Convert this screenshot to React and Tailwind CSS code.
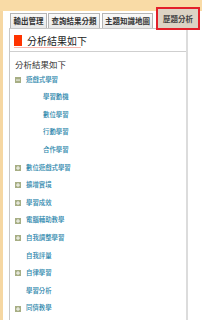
import React from "react";

const font = { fontFamily: '"Noto Sans CJK TC", "Noto Sans CJK SC", sans-serif' };

function Icon({ minus }) {
  return (
    <span className="w-[6px] h-[6px] bg-[#a7ae84] flex items-center justify-center shrink-0">
      <svg width="6" height="6" viewBox="0 0 6 6">
        <rect x="1" y="2.6" width="4" height="0.9" fill="#fff" />
        {!minus && <rect x="2.55" y="1" width="0.9" height="4" fill="#fff" />}
      </svg>
    </span>
  );
}

const rows = [
  { t: "遊戲式學習", icon: "minus", lvl: 0 },
  { t: "學習動機", lvl: 2 },
  { t: "數位學習", lvl: 2 },
  { t: "行動學習", lvl: 2 },
  { t: "合作學習", lvl: 2 },
  { t: "數位遊戲式學習", icon: "plus", lvl: 0 },
  { t: "擴增實境", icon: "plus", lvl: 0 },
  { t: "學習成效", icon: "plus", lvl: 0 },
  { t: "電腦輔助教學", icon: "plus", lvl: 0 },
  { t: "自我調整學習", icon: "plus", lvl: 0 },
  { t: "自我評量", lvl: 1 },
  { t: "自律學習", icon: "plus", lvl: 0 },
  { t: "學習分析", lvl: 1 },
  { t: "同儕教學", icon: "plus", lvl: 0 },
];

export default function App() {
  return (
    <div
      className="w-[202px] h-[320px] overflow-hidden bg-[linear-gradient(#f9dba6_11px,transparent_11px),linear-gradient(90deg,#f6d7a2_3px,#fff_3px)] pt-[7px] pl-[9px] flex flex-col"
      style={font}
    >
      {/* tabs */}
      <div className="flex items-end h-[21px] pl-[1px] text-[7.5px] text-[#333] font-bold leading-none">
        <div className="w-[37px] h-[15px] border border-b-0 border-[#b5b5b5] bg-[linear-gradient(#fafafa,#e8e8e8)] flex items-center justify-center">輸出管理</div>
        <div className="w-[52px] h-[15px] ml-[1px] border border-b-0 border-[#b5b5b5] bg-[linear-gradient(#fafafa,#e8e8e8)] flex items-center justify-center">查詢結果分類</div>
        <div className="w-[51px] h-[15px] ml-[2px] border border-b-0 border-[#b5b5b5] bg-[linear-gradient(#fafafa,#e8e8e8)] flex items-center justify-center">主題知識地圖</div>
        <div className="w-[44px] h-[23px] ml-[3px] -mb-[2px] relative z-10 border-2 border-[#e3202a] bg-[#dcd3c4] flex items-center justify-center text-[#444]">歷題分析</div>
      </div>
      {/* panel */}
      <div className="w-[179px] flex-1 border-t border-l border-[#c8c8c8] border-r-2 border-r-[#dcdcdc] flex flex-col">
        <div className="px-[4px] pt-[5px]">
          <div className="flex items-center w-[67px] h-[13px] gap-[5px]">
            <span className="w-[8px] h-[11px] bg-[#ff3300] shrink-0" />
            <span className="text-[10px] leading-none text-[#222] whitespace-nowrap">分析結果如下</span>
          </div>
          <div className="w-[67px] h-[1px] bg-[#f6b8b0]" />
        </div>
        <div className="h-[1px] bg-[#cfcfcf] mt-[3px]" />
        <div className="pl-[5px] pt-[5px] h-[19px] text-[8.5px] leading-[14px] text-[#333]">分析結果如下</div>
        <div className="flex flex-col pl-[5px]">
          {rows.map((r, i) => (
            <div key={i} className="h-[17.6px] flex items-center text-[6.4px] leading-none text-[#2a86ab] font-medium whitespace-nowrap">
              {r.lvl === 0 ? (
                <>
                  <Icon minus={r.icon === "minus"} />
                  <span className="ml-[5px]">{r.t}</span>
                </>
              ) : r.lvl === 1 ? (
                <span className="ml-[11px]">{r.t}</span>
              ) : (
                <span className="ml-[28px]">{r.t}</span>
              )}
            </div>
          ))}
        </div>
      </div>
    </div>
  );
}
